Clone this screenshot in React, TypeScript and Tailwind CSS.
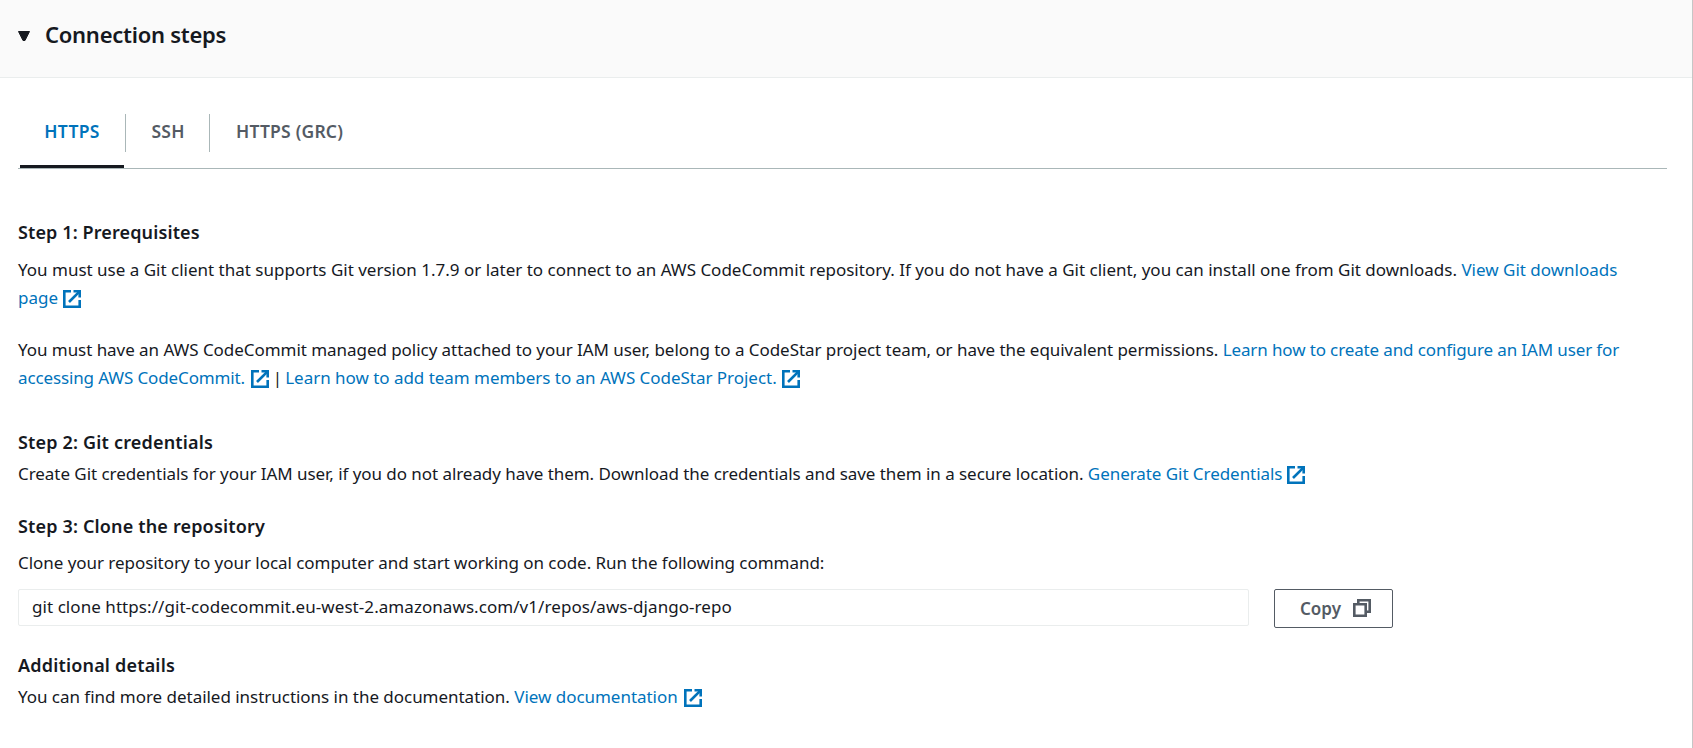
import type { ReactNode } from "react";

function ExternalIcon({ className = "" }: { className?: string }) {
  return (
    <svg viewBox="0 0 18 18" className={`inline-block h-[18px] w-[18px] align-[-4px] ${className}`} fill="none" stroke="#0073bb" strokeWidth="2.6">
      <path d="M8 1.3H1.3v15.4h15.4V10" />
      <path d="M10.5 1.3h6.2V7.5" />
      <path d="M16.4 1.6 6 12" />
    </svg>
  );
}

function CopyIcon() {
  return (
    <svg viewBox="0 0 18 18" className="h-[18px] w-[18px]" fill="none" stroke="#545b64" strokeWidth="2.6">
      <path d="M1.3 5.3h11.4v11.4H1.3z" />
      <path d="M5.3 5V1.3h11.4v11.4H13" />
    </svg>
  );
}

function Link({ className = "", children }: { className?: string; children: ReactNode }) {
  return (
    <a href="#" className={`text-[#0073bb] ${className}`}>
      {children}
    </a>
  );
}

function Heading({ className = "", children }: { className?: string; children: ReactNode }) {
  return <h3 className={`text-[18px] leading-6 font-semibold ${className}`}>{children}</h3>;
}

export default function App() {
  return (
    <section className="flex h-[748px] w-[1693px] flex-col overflow-hidden border-r border-[#c6c6c6] bg-white font-['Noto_Sans',sans-serif] text-[17px] leading-7 text-[#16191f]">
      <header className="flex h-[78px] items-start border-b border-[#eaeded] bg-[#fafafa] pt-[19px] pl-[18px]">
        <svg viewBox="0 0 12 10" className="mt-3 h-[10px] w-3" fill="#16191f" stroke="#16191f" strokeWidth="1" strokeLinejoin="round">
          <path d="M.5.5h11L7 9.5H5z" />
        </svg>
        <h2 className="ml-[15px] text-[22px] leading-[30px] font-semibold tracking-[-0.26px]">Connection steps</h2>
      </header>

      <div className="flex flex-col pt-9 pl-[18px]">
        <nav className="flex h-[55px] w-[1649px] items-start border-b border-[#aab7b8] text-[17.5px] leading-[34px] font-semibold text-[#545b64]">
          <button className="ml-[2px] flex h-[54px] w-[104px] items-start justify-center border-b-[3px] border-[#16191f] tracking-[0.35px] text-[#0073bb]">HTTPS</button>
          <button className="ml-px flex h-[38px] w-[85px] items-start border-x border-[#aab7b8] pl-[25.5px] tracking-[0.2px]">SSH</button>
          <button className="flex h-[38px] items-start pl-[26px] tracking-[0.2px]">HTTPS (GRC)</button>
        </nav>

        <Heading className="mt-[51px] tracking-[0.12px]">Step 1: Prerequisites</Heading>
        <p className="mt-3 w-[1640px]">
          You must use a Git client that supports Git version 1.7.9 or later to connect to an AWS CodeCommit repository. If you do not have a Git client, you can install one from Git downloads.{" "}
          <Link>
            View Git downloads
            <br />
            page <ExternalIcon className="ml-px" />
          </Link>
        </p>
        <p className="mt-6 w-[1640px]">
          <span className="tracking-[-0.05px]">
            You must have an AWS CodeCommit managed policy attached to your IAM user, belong to a CodeStar project team, or have the equivalent permissions.{" "}
          </span>
          <Link className="tracking-[-0.128px]">
            Learn how to create and configure an IAM user for
            <br />
            accessing AWS CodeCommit. <ExternalIcon className="ml-[1.5px]" />
          </Link>
          <span className="tracking-[-0.6px]"> | </span>
          <Link className="tracking-[-0.03px]">
            Learn how to add team members to an AWS CodeStar Project. <ExternalIcon className="ml-px" />
          </Link>
        </p>

        <Heading className="mt-[38px] tracking-[0.18px]">Step 2: Git credentials</Heading>
        <p className="mt-1.5 tracking-[-0.055px]">
          Create Git credentials for your IAM user, if you do not already have them. Download the credentials and save them in a secure location.{" "}
          <Link>
            Generate Git Credentials <ExternalIcon />
          </Link>
        </p>

        <Heading className="mt-[26px] tracking-[0.16px]">Step 3: Clone the repository</Heading>
        <p className="mt-[11px] tracking-[-0.045px]">Clone your repository to your local computer and start working on code. Run the following command:</p>
        <div className="mt-3 flex items-start gap-[25px]">
          <div className="h-[37px] w-[1231px] rounded-[2px] border border-[#eaeded] pt-[3px] pl-[13px] tracking-[0.061px]">
            git clone https://git-codecommit.eu-west-2.amazonaws.com/v1/repos/aws-django-repo
          </div>
          <button className="flex h-[39px] w-[119px] items-start rounded-[2px] border border-[#545b64] pt-[9px] pl-[25px] font-semibold text-[#545b64]">
            <span className="-mt-[4px]">Copy</span>
            <span className="ml-3">
              <CopyIcon />
            </span>
          </button>
        </div>

        <Heading className="mt-[25px] tracking-[0.18px]">Additional details</Heading>
        <p className="mt-1.5 tracking-[-0.03px]">
          You can find more detailed instructions in the documentation.{" "}
          <Link>
            View documentation <ExternalIcon className="ml-[1.5px]" />
          </Link>
        </p>
      </div>
    </section>
  );
}
